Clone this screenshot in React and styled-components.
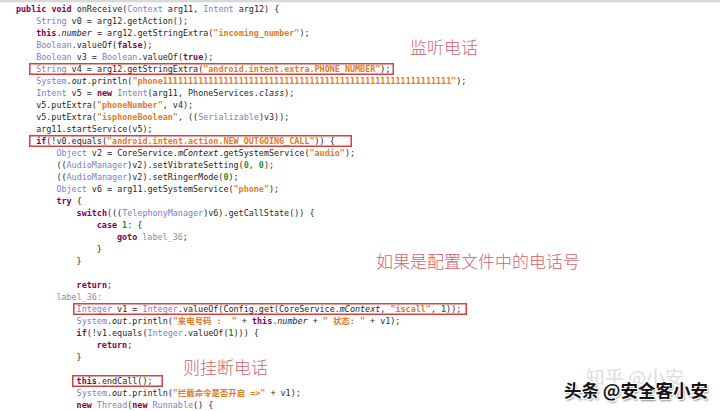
import React from 'react'
import styled, { createGlobalStyle } from 'styled-components'

const GlobalStyle = createGlobalStyle`
  html, body {
    margin: 0;
    padding: 0;
    background: #ffffff;
  }
`

const ONES = '1'.repeat(57)
const OB = '{'
const CB = '}'

const App = () => (
  <Page>
    <GlobalStyle />
    <TopRule />
    <Code>
      {getLines().map((line, index) => (
        <Line key={index} indent={line.i}>
          {line.box
            ? <Boxed pl={line.box[0]} pr={line.box[1]}>{line.c}</Boxed>
            : line.c}
        </Line>
      ))}
    </Code>
    <Note x={410} y={37}>监听电话</Note>
    <Note x={376} y={251}>如果是配置文件中的电话号</Note>
    <Note x={183} y={357}>则挂断电话</Note>
    <Watermark>
      <Faint>知乎 @小安</Faint>
      <Brand>头条 @安全客小安</Brand>
    </Watermark>
  </Page>
)

const Page = styled.div`
  position: relative;
  width: 720px;
  height: 411px;
  overflow: hidden;
  background: #ffffff;
`

const TopRule = styled.div`
  height: 2px;
  background: #d9d9d9;
  border-bottom: 1px solid #f1f1f1;
`

const Code = styled.div`
  display: flex;
  flex-direction: column;
  font-family: "DejaVu Sans Mono", "Noto Sans CJK SC", monospace;
  font-size: 8.42px;
  color: #1f1f1f;
`

const Line = styled.div`
  height: 12px;
  line-height: 12px;
  white-space: pre;
  padding-left: ${p => 16 + p.indent * 20.2}px;
`

const Boxed = styled.span`
  display: inline-block;
  height: 12px;
  margin-left: ${p => -p.pl}px;
  padding: 0 ${p => p.pr}px 0 ${p => p.pl}px;
  box-shadow: inset 0 0 0 1.5px #d4413f;
  box-sizing: border-box;
`

const K = styled.span`
  color: #7f0055;
  font-weight: bold;
`

const T = styled.span`
  color: #7d7dc9;
`

const S = styled.span`
  color: #e07b1e;
  font-weight: bold;
`

const N = styled.span`
  color: #2a9130;
  font-weight: bold;
`

const F = styled.span`
  font-style: italic;
`

const L = styled.span`
  color: #8c8c8c;
`

const Note = styled.div`
  position: absolute;
  left: ${p => p.x}px;
  top: ${p => p.y}px;
  font-family: "Noto Sans CJK SC", sans-serif;
  font-size: 17px;
  font-weight: 300;
  line-height: 20px;
  color: #d0646c;
  white-space: nowrap;
`

const Watermark = styled.div`
  position: absolute;
  right: 12px;
  bottom: 11px;
  display: grid;
  justify-items: end;
  font-family: "Noto Sans CJK SC", sans-serif;
  white-space: nowrap;
`

const Faint = styled.div`
  grid-area: 1 / 1;
  margin: -17px 24px 0 0;
  font-size: 19px;
  color: #dedede;
`

const Brand = styled.div`
  grid-area: 1 / 1;
  font-size: 17.5px;
  font-weight: 700;
  line-height: 20px;
  color: #141414;
  text-shadow: 1px 1px 0 #fff, -1px -1px 0 #fff, 1px -1px 0 #fff, -1px 1px 0 #fff, 1.5px 1.5px 2px #888;
`

const getLines = () => [
  { i: 0, c: <><K>public</K> <K>void</K> onReceive(<T>Context</T> arg11, <T>Intent</T> arg12) {OB}</> },
  { i: 1, c: <><T>String</T> v0 = arg12.getAction();</> },
  { i: 1, c: <><K>this</K>.<F>number</F> = arg12.getStringExtra(<S>"incoming_number"</S>);</> },
  { i: 1, c: <><T>Boolean</T>.valueOf(<K>false</K>);</> },
  { i: 1, c: <><T>Boolean</T> v3 = <T>Boolean</T>.valueOf(<K>true</K>);</> },
  { i: 1, box: [7, 4], c: <><T>String</T> v4 = arg12.getStringExtra(<S>"android.intent.extra.PHONE_NUMBER"</S>);</> },
  { i: 1, c: <><T>System</T>.<F>out</F>.println(<S>"phone{ONES}"</S>);</> },
  { i: 1, c: <><T>Intent</T> v5 = <K>new</K> <T>Intent</T>(arg11, PhoneServices.<F>class</F>);</> },
  { i: 1, c: <>v5.putExtra(<S>"phoneNumber"</S>, v4);</> },
  { i: 1, c: <>v5.putExtra(<S>"isphoneBoolean"</S>, ((<T>Serializable</T>)v3));</> },
  { i: 1, c: <>arg11.startService(v5);</> },
  { i: 1, box: [7, 17], c: <><K>if</K>(!v0.equals(<S>"android.intent.action.NEW_OUTGOING_CALL"</S>)) {OB}</> },
  { i: 2, c: <><T>Object</T> v2 = CoreService.<F>mContext</F>.getSystemService(<S>"audio"</S>);</> },
  { i: 2, c: <>((<T>AudioManager</T>)v2).setVibrateSetting(<N>0</N>, <N>0</N>);</> },
  { i: 2, c: <>((<T>AudioManager</T>)v2).setRingerMode(<N>0</N>);</> },
  { i: 2, c: <><T>Object</T> v6 = arg11.getSystemService(<S>"phone"</S>);</> },
  { i: 2, c: <><K>try</K> {OB}</> },
  { i: 3, c: <><K>switch</K>(((<T>TelephonyManager</T>)v6).getCallState()) {OB}</> },
  { i: 4, c: <><K>case</K> <N>1</N>: {OB}</> },
  { i: 5, c: <><K>goto</K> <L>label_36</L>;</> },
  { i: 4, c: CB },
  { i: 3, c: CB },
  { i: 3, c: null },
  { i: 3, c: <><K>return</K>;</> },
  { i: 2, c: <L>label_36:</L> },
  { i: 3, box: [4, 6], c: <><T>Integer</T> v1 = <T>Integer</T>.valueOf(Config.get(CoreService.<F>mContext</F>, <S>"iscall"</S>, <N>1</N>));</> },
  { i: 3, c: <><T>System</T>.<F>out</F>.println(<S>"来电号码 :  "</S> + <K>this</K>.<F>number</F> + <S>" 状态: "</S> + v1);</> },
  { i: 3, c: <><K>if</K>(!v1.equals(<T>Integer</T>.valueOf(<N>1</N>))) {OB}</> },
  { i: 4, c: <><K>return</K>;</> },
  { i: 3, c: CB },
  { i: 3, c: null },
  { i: 3, box: [5, 10], c: <><K>this</K>.endCall();</> },
  { i: 3, c: <><T>System</T>.<F>out</F>.println(<S>{'"拦截命令是否开启 =>"'}</S> + v1);</> },
  { i: 3, c: <><K>new</K> <T>Thread</T>(<K>new</K> <T>Runnable</T>() {OB}</> }
]

export default App
